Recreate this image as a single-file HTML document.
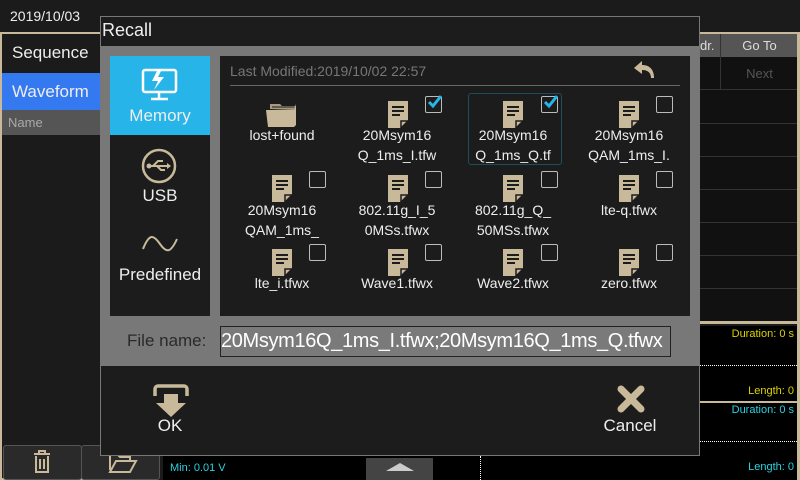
<!DOCTYPE html><html><head><style>
body{margin:0;width:800px;height:480px;background:#1b1b1b;position:relative;overflow:hidden;font-family:"Liberation Sans",sans-serif;color:#eee}
.a{position:absolute}
.doc{position:absolute;width:20px;height:27px}
.cb{position:absolute;width:15px;height:15px;border:1px solid #bbb;border-radius:2px}
.lbl{position:absolute;width:110px;text-align:center;font-size:14px;line-height:20px;color:#eee}
</style></head><body>
<div class="a" style="left:10px;top:8px;font-size:14px">2019/10/03</div>
<div class="a" style="left:0;top:32px;width:100px;height:448px;border:2px solid #c8b99a;border-right:none;box-sizing:border-box;background:#1b1b1b"></div>
<div class="a" style="left:2px;top:34px;width:98px;height:38px;font-size:17px;line-height:38px;padding-left:10px">Sequence</div>
<div class="a" style="left:2px;top:73px;width:98px;height:37px;background:#3479f0;font-size:17px;line-height:37px;padding-left:10px">Waveform</div>
<div class="a" style="left:2px;top:110px;width:98px;height:25px;background:#555;color:#aaa;font-size:13px;line-height:25px;padding-left:6px">Name</div>
<div class="a" style="left:3px;top:445px;width:77px;height:33px;background:#2a2a2a;border:1px solid #555;border-radius:3px"></div>
<div class="a" style="left:81px;top:445px;width:77px;height:33px;background:#2a2a2a;border:1px solid #555;border-radius:3px"></div>
<svg class="a" style="left:32px;top:450px" width="20" height="24"><g fill="none" stroke="#c8b99a" stroke-width="2"><path d="M2 4h16M7 4V1h6v3M4 6v16h12V6M8 9v10M12 9v10"/></g></svg>
<svg class="a" style="left:108px;top:452px" width="30" height="22"><g fill="none" stroke="#c8b99a" stroke-width="2"><path d="M2 18V3h8l2 2h10v4"/><path d="M2 20l6-11h20l-6 11z"/></g></svg>
<div class="a" style="left:163px;top:456px;width:637px;height:24px;background:#000"></div>
<div class="a" style="left:170px;top:462px;font-size:11px;color:#2bd2e0">Min: 0.01 V</div>
<div class="a" style="left:366px;top:458px;width:67px;height:22px;background:#444"></div>
<div class="a" style="left:386px;top:463px;width:0;height:0;border-left:14px solid transparent;border-right:14px solid transparent;border-bottom:8px solid #ccc"></div>
<div class="a" style="left:480px;top:456px;height:24px;border-left:1px dotted #fff"></div>
<div class="a" style="left:700px;top:32px;width:100px;height:292px;border-top:2px solid #c8b99a;border-right:3px solid #c8b99a;border-bottom:3px solid #c8b99a;box-sizing:border-box;background:#111"></div>
<div class="a" style="left:700px;top:34px;width:97px;height:23px;background:#555"></div>
<div class="a" style="left:700px;top:38px;font-size:13px;color:#ddd">dr.</div>
<div class="a" style="left:720px;top:34px;width:77px;height:56px;border-left:1px solid #333;text-align:center;font-size:13px"><div style="line-height:23px;color:#ddd">Go To</div><div style="line-height:33px;color:#555">Next</div></div>
<div class="a" style="left:700px;top:89px;width:97px;height:1px;background:#333"></div>
<div class="a" style="left:700px;top:123px;width:97px;height:1px;background:#333"></div>
<div class="a" style="left:700px;top:156px;width:97px;height:1px;background:#333"></div>
<div class="a" style="left:700px;top:189px;width:97px;height:1px;background:#333"></div>
<div class="a" style="left:700px;top:222px;width:97px;height:1px;background:#333"></div>
<div class="a" style="left:700px;top:255px;width:97px;height:1px;background:#333"></div>
<div class="a" style="left:700px;top:288px;width:97px;height:1px;background:#333"></div>
<div class="a" style="left:700px;top:326px;width:97px;height:154px;background:#000"></div>
<div class="a" style="left:700px;top:401px;width:97px;height:2px;background:#c8b99a"></div>
<div class="a" style="left:700px;top:365px;width:97px;border-top:1px dotted #fff"></div>
<div class="a" style="left:700px;top:441px;width:97px;border-top:1px dotted #fff"></div>
<div class="a" style="right:6px;top:328px;font-size:11px;color:#dcd200">Duration: 0 s</div>
<div class="a" style="right:6px;top:385px;font-size:11px;color:#dcd200">Length: 0</div>
<div class="a" style="right:6px;top:404px;font-size:11px;color:#2bd2e0">Duration: 0 s</div>
<div class="a" style="right:6px;top:461px;font-size:11px;color:#2bd2e0">Length: 0</div>
<div class="a" style="left:797px;top:324px;width:3px;height:156px;background:#c8b99a"></div>

<div class="a" style="left:100px;top:16px;width:600px;height:440px;border:1px solid #777;box-sizing:border-box;background:#1c1c1c"></div>
<div class="a" style="left:102px;top:20px;font-size:18px">Recall</div>
<div class="a" style="left:101px;top:46px;width:598px;height:320px;background:#787878"></div>
<div class="a" style="left:110px;top:56px;width:100px;height:260px;background:#1c1c1c"></div>
<div class="a" style="left:110px;top:56px;width:100px;height:79px;background:#27b4e8"></div>
<svg class="a" style="left:141px;top:68px" width="38" height="34"><g fill="none" stroke="#fff" stroke-width="2.5"><rect x="2" y="2" width="33" height="22" rx="2"/><path d="M18 24v6M10 31h17"/></g><path d="M17 1l-6 12h6l-4 9 10-13h-6l4-8z" fill="#fff"/></svg>
<div class="a" style="left:110px;top:106px;width:100px;text-align:center;font-size:17px">Memory</div>
<svg class="a" style="left:141px;top:148px" width="36" height="36"><circle cx="18" cy="18" r="16" fill="none" stroke="#c8b99a" stroke-width="2.5"/><g stroke="#c8b99a" stroke-width="2" fill="none"><path d="M7 18h22M12 18l5-5h5M16 18l4 4h4"/></g><circle cx="8" cy="18" r="2.5" fill="#c8b99a"/><path d="M26 15l4 3-4 3z" fill="#c8b99a"/></svg>
<div class="a" style="left:110px;top:186px;width:100px;text-align:center;font-size:17px">USB</div>
<svg class="a" style="left:141px;top:236px" width="38" height="16"><path d="M2 13C8 -2 12 -2 19 8S30 16 36 3" fill="none" stroke="#c8b99a" stroke-width="2"/></svg>
<div class="a" style="left:110px;top:265px;width:100px;text-align:center;font-size:17px">Predefined</div>

<div class="a" style="left:220px;top:56px;width:470px;height:260px;background:#1c1c1c"></div>
<div class="a" style="left:230px;top:63px;font-size:14px;color:#777">Last Modified:2019/10/02 22:57</div>
<div class="a" style="left:230px;top:85px;width:450px;height:1px;background:#666"></div>
<svg class="a" style="left:632px;top:60px" width="24" height="20"><path d="M2 8l8-7v4c8 0 12 5 12 13h-3c0-5-3-8-9-8v4z" fill="#c8b99a"/></svg>

<svg width="0" height="0" style="position:absolute"><defs><symbol id="d" viewBox="0 0 20 27"><path d="M0 0h20v19l-8 8H0z" fill="#c8b99a"/><path d="M4 6h12M4 10h12M4 14h8" stroke="#1c1c1c" stroke-width="2"/><path d="M13 27v-7h7" fill="none" stroke="#1c1c1c" stroke-width="1.5"/></symbol>
<symbol id="c" viewBox="0 0 16 16"><path d="M3 8l4 4 8-10" fill="none" stroke="#27b4e8" stroke-width="3"/></symbol></defs></svg>

<div class="a" style="left:468px;top:93px;width:92px;height:70px;border:1px solid #1f4d60;border-radius:3px"></div>

<svg class="a" style="left:266px;top:101px" width="32" height="26"><path d="M4 8V3h10l2 2h13l-1 4" fill="#a89a80"/><path d="M6 6h22" stroke="#1c1c1c" stroke-width="1"/><path d="M0 9h28l2-6v21l-2 2H2z" fill="#c8b99a"/></svg>
<div class="lbl" style="left:227px;top:125px">lost+found</div>
<svg class="doc" style="left:388px;top:101px"><use href="#d"/></svg><div class="cb" style="left:425px;top:96px"></div><svg class="a" style="left:426px;top:94px" width="16" height="16"><use href="#c"/></svg>
<div class="lbl" style="left:342px;top:125px">20Msym16<br>Q_1ms_I.tfw</div>
<svg class="doc" style="left:503px;top:101px"><use href="#d"/></svg><div class="cb" style="left:541px;top:96px"></div><svg class="a" style="left:542px;top:94px" width="16" height="16"><use href="#c"/></svg>
<div class="lbl" style="left:458px;top:125px">20Msym16<br>Q_1ms_Q.tf</div>
<svg class="doc" style="left:619px;top:101px"><use href="#d"/></svg><div class="cb" style="left:656px;top:96px"></div>
<div class="lbl" style="left:574px;top:125px">20Msym16<br>QAM_1ms_I.</div>
<svg class="doc" style="left:272px;top:175px"><use href="#d"/></svg><div class="cb" style="left:309px;top:171px"></div>
<div class="lbl" style="left:227px;top:200px">20Msym16<br>QAM_1ms_</div>
<svg class="doc" style="left:388px;top:175px"><use href="#d"/></svg><div class="cb" style="left:425px;top:171px"></div>
<div class="lbl" style="left:342px;top:200px">802.11g_I_5<br>0MSs.tfwx</div>
<svg class="doc" style="left:503px;top:175px"><use href="#d"/></svg><div class="cb" style="left:541px;top:171px"></div>
<div class="lbl" style="left:458px;top:200px">802.11g_Q_<br>50MSs.tfwx</div>
<svg class="doc" style="left:619px;top:175px"><use href="#d"/></svg><div class="cb" style="left:656px;top:171px"></div>
<div class="lbl" style="left:574px;top:200px">lte-q.tfwx</div>
<svg class="doc" style="left:272px;top:249px"><use href="#d"/></svg><div class="cb" style="left:309px;top:244px"></div>
<div class="lbl" style="left:227px;top:273px">lte_i.tfwx</div>
<svg class="doc" style="left:388px;top:249px"><use href="#d"/></svg><div class="cb" style="left:425px;top:244px"></div>
<div class="lbl" style="left:342px;top:273px">Wave1.tfwx</div>
<svg class="doc" style="left:503px;top:249px"><use href="#d"/></svg><div class="cb" style="left:541px;top:244px"></div>
<div class="lbl" style="left:458px;top:273px">Wave2.tfwx</div>
<svg class="doc" style="left:619px;top:249px"><use href="#d"/></svg><div class="cb" style="left:656px;top:244px"></div>
<div class="lbl" style="left:574px;top:273px">zero.tfwx</div>

<div class="a" style="left:127px;top:331px;font-size:17px;color:#2a2a2a">File name:</div>
<div class="a" style="left:220px;top:326px;width:449px;height:29px;border:1px solid #222;background:#7a7a7a;font-size:20px;line-height:29px;color:#fff;overflow:hidden;white-space:nowrap;letter-spacing:-0.35px">20Msym16Q_1ms_I.tfwx;20Msym16Q_1ms_Q.tfwx</div>

<svg class="a" style="left:152px;top:384px" width="38" height="34"><path d="M3 12V5a3 3 0 0 1 3-3h26a3 3 0 0 1 3 3v7" fill="none" stroke="#c8b99a" stroke-width="3.5"/><path d="M12 10h14v9h8L19 33 4 19h8z" fill="#c8b99a"/></svg>
<div class="a" style="left:130px;top:416px;width:80px;text-align:center;font-size:17px">OK</div>
<svg class="a" style="left:617px;top:385px" width="28" height="28"><path d="M4 4L24 24M24 4L4 24" stroke="#c8b99a" stroke-width="7" stroke-linecap="round"/></svg>
<div class="a" style="left:590px;top:416px;width:80px;text-align:center;font-size:17px">Cancel</div>
</body></html>
